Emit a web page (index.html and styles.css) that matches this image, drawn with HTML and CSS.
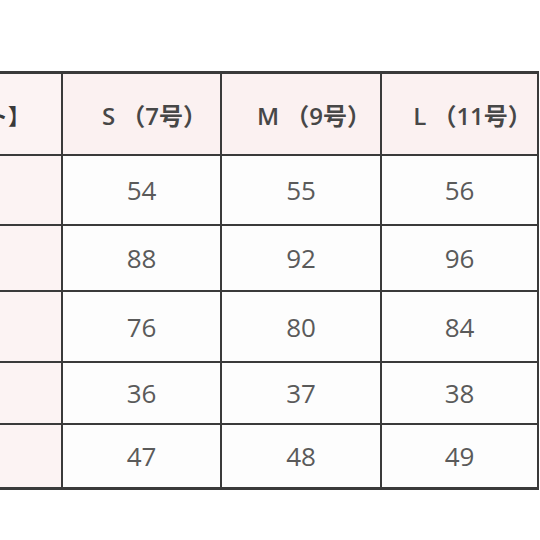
FILE: index.html
```html
<!DOCTYPE html>
<html lang="ja">
<head>
<meta charset="utf-8">
<title>サイズ表</title>
<link rel="stylesheet" href="styles.css">
</head>
<body>
<div class="page">
  <div class="chart">
    <div class="cell label head"><span class="label-text">【サイズチャート】</span></div>
    <div class="cell head">S （7号）</div>
    <div class="cell head">M （9号）</div>
    <div class="cell head">L （11号）</div>

    <div class="cell label"></div>
    <div class="cell">54</div>
    <div class="cell">55</div>
    <div class="cell">56</div>

    <div class="cell label"></div>
    <div class="cell">88</div>
    <div class="cell">92</div>
    <div class="cell">96</div>

    <div class="cell label"></div>
    <div class="cell">76</div>
    <div class="cell">80</div>
    <div class="cell">84</div>

    <div class="cell label"></div>
    <div class="cell">36</div>
    <div class="cell">37</div>
    <div class="cell">38</div>

    <div class="cell label"></div>
    <div class="cell">47</div>
    <div class="cell">48</div>
    <div class="cell">49</div>
  </div>
</div>
</body>
</html>
```

FILE: styles.css
```css
html, body {
  margin: 0;
  padding: 0;
  background: #ffffff;
}

.page {
  width: 540px;
  height: 540px;
  overflow: hidden;
  padding-top: 71px;
  box-sizing: border-box;
}

.chart {
  margin-left: -139px;
  width: max-content;
  display: grid;
  grid-template-columns: 200px 157px 158px 155px;
  grid-template-rows: 80px 68px 64px 69px 60px 62px;
  gap: 2px;
  padding: 3px 2px 3px 0;
  background: #3a3a3a;
  font-family: "Open Sans", "Noto Sans CJK JP", sans-serif;
  font-size: 26px;
  color: #5a5a5a;
}

.cell {
  background: #fdfdfd;
  display: flex;
  align-items: center;
  justify-content: center;
  white-space: nowrap;
}

.cell.head {
  background: #fbf1f1;
  color: #474747;
  font-weight: 600;
  font-size: 24px;
  padding-left: 26px;
}

.cell.label {
  background: #fcf3f3;
  justify-content: flex-end;
  overflow: hidden;
  padding-left: 0;
  padding-right: 44px;
}

.label-text {
  font-weight: 700;
  color: #3a3a3a;
  font-family: "Noto Sans CJK JP", sans-serif;
  font-size: 22px;
  margin-right: -13px;
}
```
